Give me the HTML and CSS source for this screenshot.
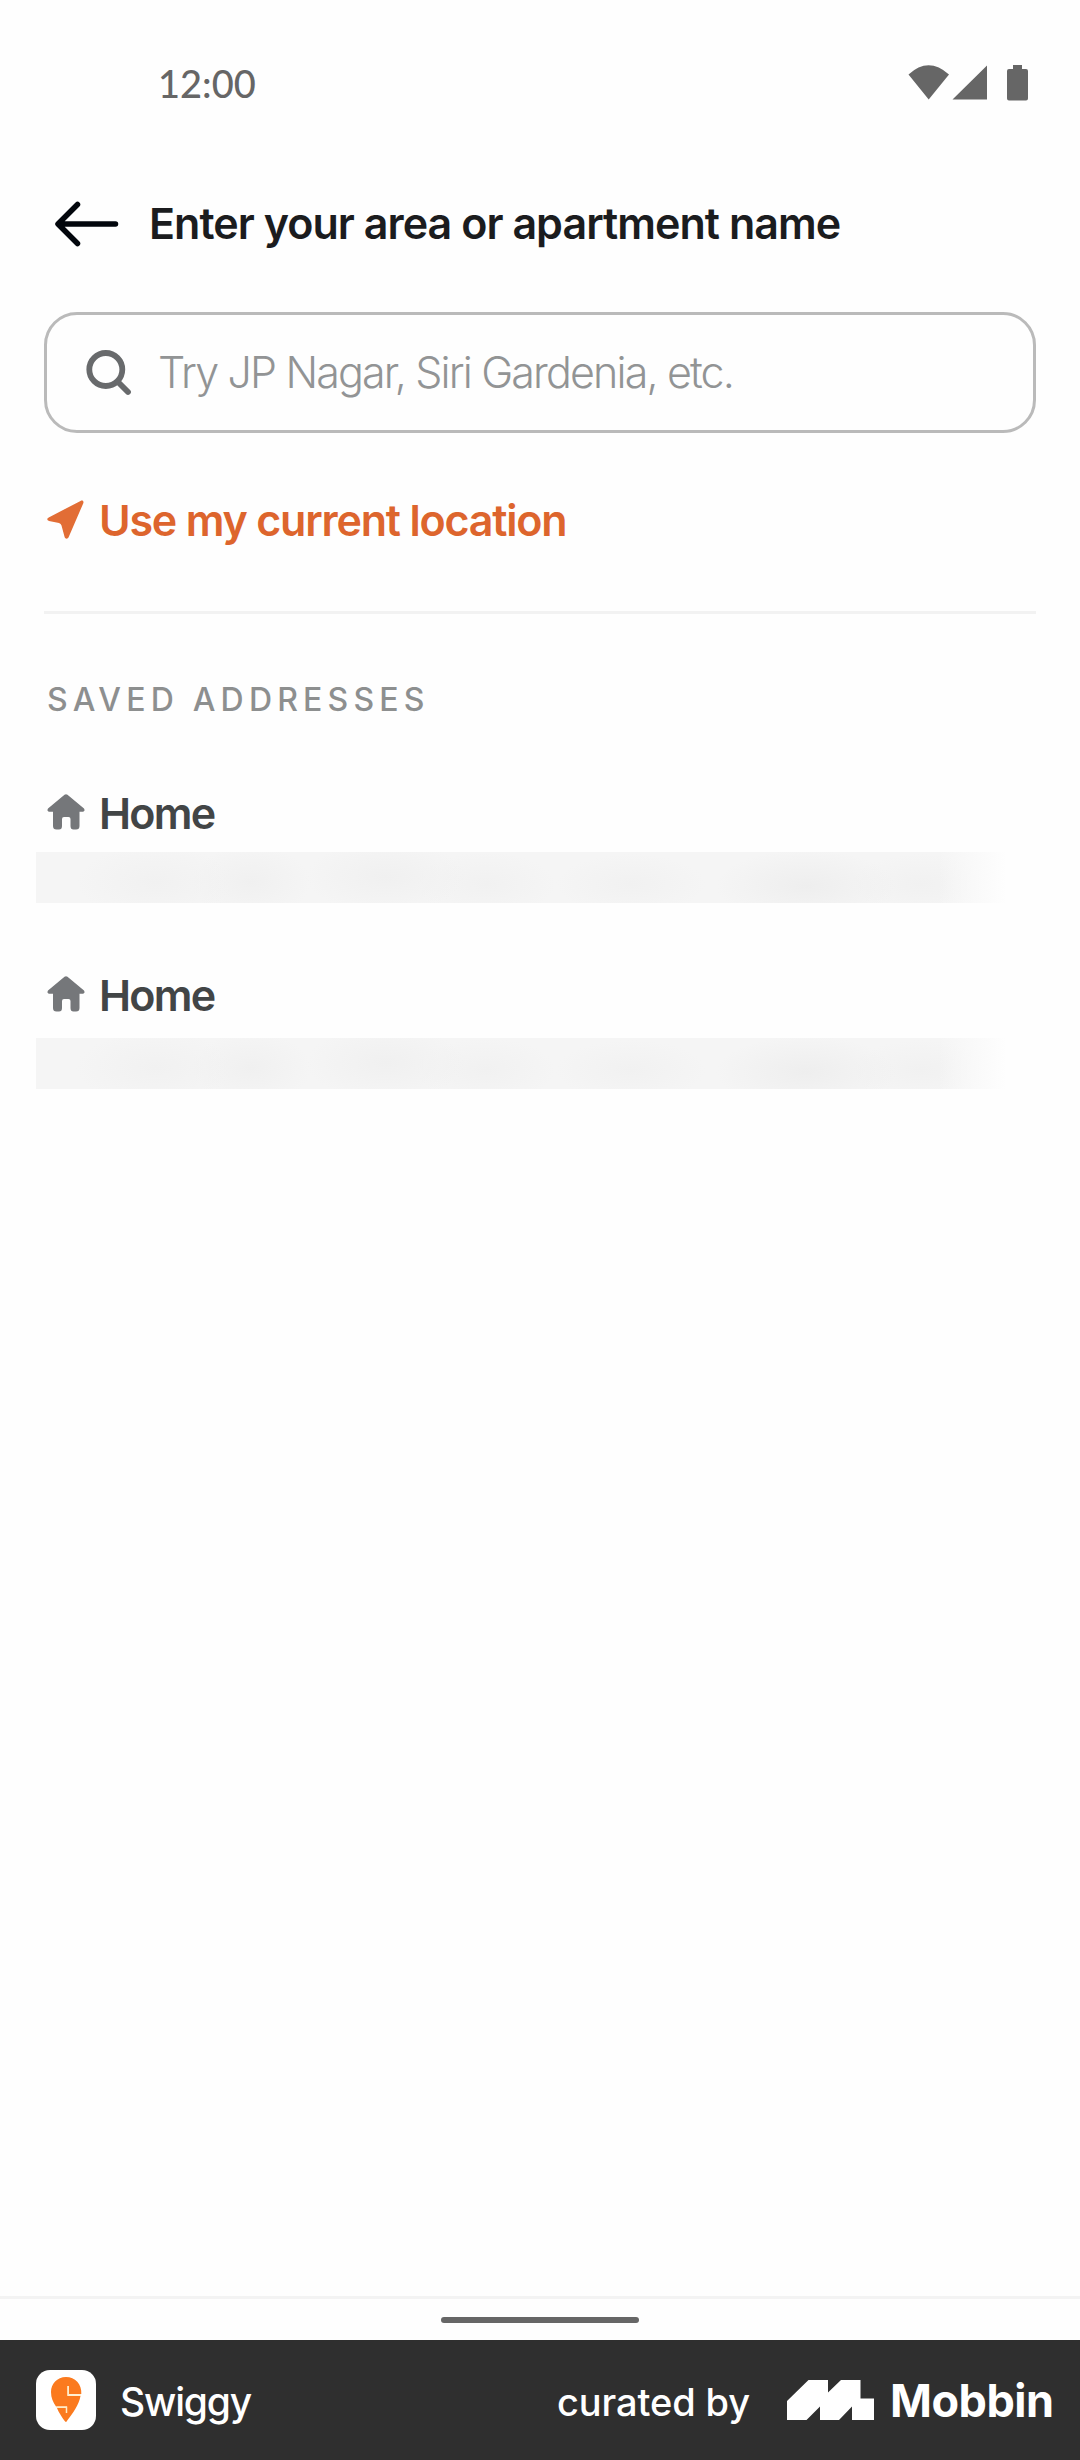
FILE: index.html
```html
<!DOCTYPE html>
<html lang="en">
<head>
<meta charset="utf-8">
<title>Select location</title>
<link rel="stylesheet" href="styles.css">
</head>
<body>
<div class="screen">
  <header class="status">
    <span class="clock">12:00</span>
    <svg class="status-icons" viewBox="908 64 121 38" width="121" height="38">
      <path d="M908.5 74.5Q928.500 56 949 74.500L928.700 99.500ZM952.500 99.500L987 65.500V99.500ZM1013 65h9v4h4a2 2 0 0 1 2 2v27.500a2 2 0 0 1-2 2h-17a2 2 0 0 1-2-2V71a2 2 0 0 1 2-2h4z"/>
    </svg>
  </header>
  <div class="titlebar">
    <svg class="back" viewBox="0 0 66 46" width="66" height="46"><path d="M23.500 3.500L4 23L23.500 42.500M5 23H61.500"/></svg>
    <h1 class="title">Enter your area or apartment name</h1>
  </div>
  <div class="search">
    <svg class="search-icon" viewBox="0 0 46 46" width="46" height="46"><circle cx="19.800" cy="19.500" r="16.500"/><path d="M32 32L42 42"/></svg>
    <span class="placeholder">Try JP Nagar, Siri Gardenia, etc.</span>
  </div>
  <div class="locate">
    <svg class="nav" viewBox="0 0 38 40" width="38" height="40"><path d="M33.500 .9C35.500 0 37 1 36.300 3.200L21.700 37C20.700 39.400 18.300 39.200 17.600 37L14.500 25.500Q14 23.500 12 23L2 21C-.2 20.500-.2 18.500 1.700 17.500Z"/></svg>
    <span class="locate-text">Use my current location</span>
  </div>
  <h2 class="section">SAVED ADDRESSES</h2>
  <div class="address">
    <div class="row">
      <svg class="house" viewBox="0 0 38 36" width="38" height="36"><path d="M17.500 .8Q19 -.2 20.500 .8L37 14.500Q38.500 17 36 17.800H32.500V32Q32.500 35.500 29 35.500H26.500Q23.500 35.500 23.500 32V25Q23.500 23 21.500 23H17Q15 23 15 25V32Q15 35.500 12 35.500H9.500Q6 35.500 6 32V17.800H2Q-.5 17 1 14.500Z"/></svg>
      <span class="name">Home</span>
    </div>
    <div class="redacted"></div>
  </div>
  <div class="address second">
    <div class="row">
      <svg class="house" viewBox="0 0 38 36" width="38" height="36"><path d="M17.500 .8Q19 -.2 20.500 .8L37 14.500Q38.500 17 36 17.800H32.500V32Q32.500 35.500 29 35.500H26.500Q23.500 35.500 23.500 32V25Q23.500 23 21.500 23H17Q15 23 15 25V32Q15 35.500 12 35.500H9.500Q6 35.500 6 32V17.800H2Q-.5 17 1 14.500Z"/></svg>
      <span class="name">Home</span>
    </div>
    <div class="redacted"></div>
  </div>
  <div class="gesture"><div class="pill"></div></div>
  <footer class="footer">
    <svg class="app-logo" viewBox="0 0 60 60" width="60" height="60"><rect width="60" height="60" rx="14" fill="#fff"/><path fill="#fb7a1e" d="M30 7C21 7 15 14 15 22C15 28 17 32 20 36.500H31V43H30V38H21C23 43 27 49 30 52.300C37 43 43 35 44.500 26H31.500V16H33V24H45.300C46 14 39 7 30 7Z"/><path d="M32.200 16V25H44.800M20.500 37.200H30.500V43" fill="none" stroke="#ffecc4" stroke-width="1.500"/></svg>
    <span class="app-name">Swiggy</span>
    <span class="curated">curated by</span>
    <svg class="mobbin-logo" viewBox="0 0 87 40" width="87" height="40"><path fill="#fff" d="M0 21L21.500 0H41V12.500L54 0H73.500V18.500H87V40H65V26.500L52 40H33V26.500L19.500 40H0Z"/></svg>
    <span class="mobbin">Mobbin</span>
  </footer>
</div>
</body>
</html>
```
FILE: styles.css
```css
body { margin: 0; background: #fefefe; font-family: Inter, "Liberation Sans", sans-serif; }
svg { display: block; flex: none; overflow: visible; }
span, h1, h2 { white-space: nowrap; margin: 0; }
.screen { width: 1080px; height: 2460px; display: flex; flex-direction: column; box-sizing: border-box; }
.status { height: 166px; padding: 0 51px 2px 158px; display: flex; justify-content: space-between; align-items: center; color: #666; }
.clock { font-family: Lato, sans-serif; font-size: 38px; font-weight: 500; line-height: 48px; letter-spacing: 0; }
.status-icons { fill: #666; }
.titlebar { height: 111px; margin-bottom: 33px; padding-left: 54px; display: flex; align-items: center; }
.back { fill: none; stroke: #02060c; stroke-width: 5.500px; stroke-linecap: round; stroke-linejoin: round; }
.title { margin-left: 29px; padding-bottom: 2px; font-size: 43px; font-weight: 600; line-height: 52px; letter-spacing: -0.960px; color: #1b1c1e; }
.search { height: 115px; margin: 0 44px; padding-left: 39px; border: 3px solid #bababa; border-radius: 33px; display: flex; align-items: center; }
.search-icon { fill: none; stroke: #686a6c; stroke-width: 5.800px; stroke-linecap: round; }
.placeholder { margin-left: 26px; padding-bottom: 2px; font-size: 43px; font-weight: 350; line-height: 52px; letter-spacing: -1.860px; color: #929495; }
.locate { height: 175px; margin: 0 44px; padding: 0 0 3px 3px; border-bottom: 3px solid #f2f2f2; display: flex; align-items: center; }
.nav { margin-bottom: 2px; fill: #e26d35; }
.locate-text { margin-left: 14px; padding-bottom: 1px; font-size: 43px; font-weight: 600; line-height: 52px; letter-spacing: -1.200px; color: #dd652d; }
.section { margin: 66px 0 0 47px; font-size: 32px; font-weight: 450; line-height: 40px; letter-spacing: 5.200px; color: #8d8f8f; }
.address { margin-top: 67px; display: flex; flex-direction: column; gap: 13px; }
.second { margin-top: 66px; gap: 17px; }
.row { display: flex; align-items: center; padding-left: 47px; }
.house { margin-bottom: 3px; fill: #75777a; }
.name { margin-left: 14px; font-size: 43px; font-weight: 600; line-height: 52px; letter-spacing: -1.700px; color: #424546; }
.redacted {
  width: 970px;
  height: 51px;
  margin-left: 36px;
  background:
    linear-gradient(90deg, transparent 93%, #fbfbfb 98%, #fefefe 100%),
    radial-gradient(ellipse 80px 36px at 120px 30px, #f1f1f1, transparent),
    radial-gradient(ellipse 60px 36px at 215px 30px, #f0f0f0, transparent),
    radial-gradient(ellipse 80px 36px at 350px 25px, #f0f0f0, transparent),
    radial-gradient(ellipse 70px 32px at 450px 32px, #f1f1f1, transparent),
    radial-gradient(ellipse 75px 30px at 595px 32px, #f1f1f1, transparent),
    radial-gradient(ellipse 90px 36px at 770px 34px, #eee, transparent),
    radial-gradient(ellipse 70px 30px at 885px 32px, #f1f1f1, transparent),
    #f5f5f5;
}
.gesture { height: 41px; margin-top: auto; border-top: 3px solid #f3f3f3; display: flex; justify-content: center; }
.pill { width: 198px; height: 6px; margin-top: 18px; border-radius: 3px; background: #666; }
.footer { height: 120px; padding-left: 36px; display: flex; align-items: center; background: #2f2f2f; color: #fff; }
.app-name { width: 135px; margin-left: 24px; padding-top: 3px; font-size: 39px; font-weight: 500; letter-spacing: -1.200px; }
.curated { width: 192px; margin-left: 302px; padding-top: 3px; font-size: 38px; font-weight: 500; letter-spacing: -0.100px; }
.mobbin-logo { margin-left: 38px; }
.mobbin { margin-left: 16px; font-size: 45px; font-weight: 700; letter-spacing: -0.500px; }
```
